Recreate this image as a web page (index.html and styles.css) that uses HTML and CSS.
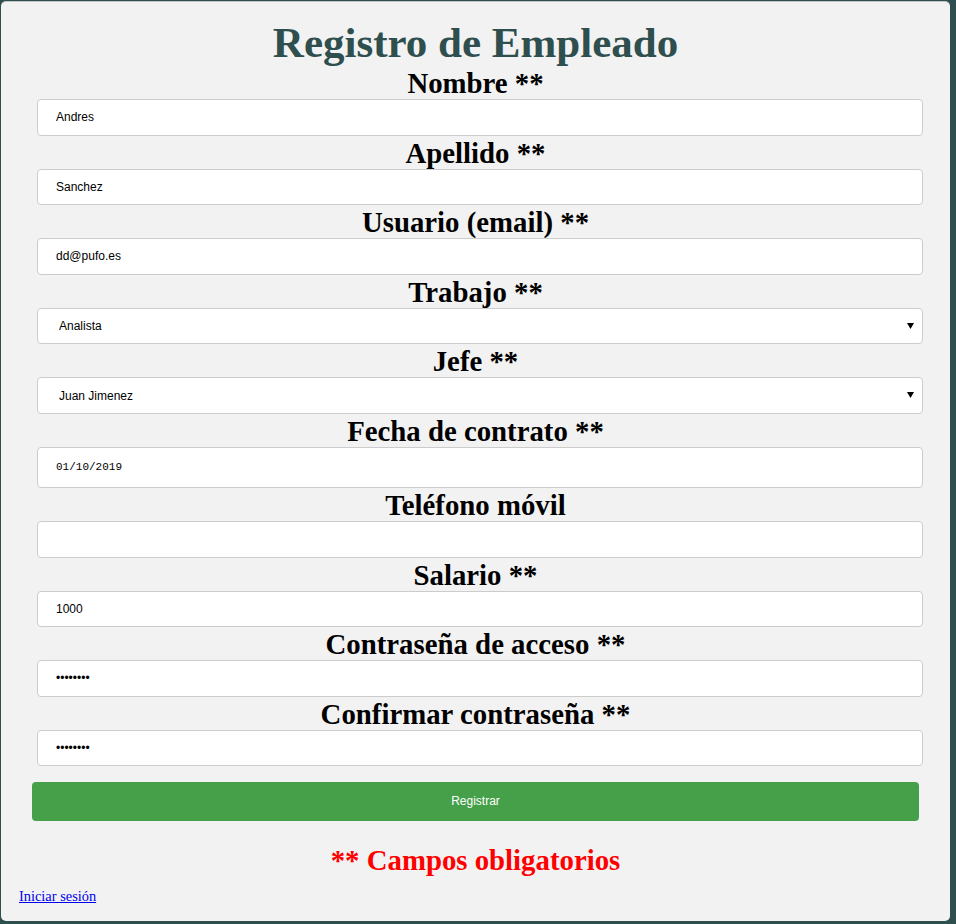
FILE: index.html
```html
<!DOCTYPE html>
<html lang="es">
<head>
<meta charset="utf-8">
<title>Registro de Empleado</title>
<link rel="stylesheet" href="styles.css">
</head>
<body>
<div class="container">
  <h1 class="title">Registro de Empleado</h1>
  <form class="form" action="#" onsubmit="return false">
    <label class="label" for="nombre">Nombre **</label>
    <input class="field" id="nombre" type="text" value="Andres">

    <label class="label" for="apellido">Apellido **</label>
    <input class="field" id="apellido" type="text" value="Sanchez">

    <label class="label" for="email">Usuario (email) **</label>
    <input class="field" id="email" type="text" value="dd@pufo.es">

    <label class="label" for="trabajo">Trabajo **</label>
    <div class="select-wrap">
      <select class="field select" id="trabajo">
        <option>Analista</option>
        <option>Programador</option>
      </select>
      <svg class="arrow" width="7" height="6" viewBox="0 0 7 6"><path d="M0 0H7L3.5 6Z" fill="#000"/></svg>
    </div>

    <label class="label" for="jefe">Jefe **</label>
    <div class="select-wrap">
      <select class="field select" id="jefe">
        <option>Juan Jimenez</option>
      </select>
      <svg class="arrow" width="7" height="6" viewBox="0 0 7 6"><path d="M0 0H7L3.5 6Z" fill="#000"/></svg>
    </div>

    <label class="label" for="fecha">Fecha de contrato **</label>
    <input class="field date" id="fecha" type="text" value="01/10/2019">

    <label class="label" for="telefono">Teléfono móvil</label>
    <input class="field" id="telefono" type="text" value="">

    <label class="label" for="salario">Salario **</label>
    <input class="field" id="salario" type="text" value="1000">

    <label class="label" for="pass">Contraseña de acceso **</label>
    <input class="field" id="pass" type="password" value="12345678">

    <label class="label" for="pass2">Confirmar contraseña **</label>
    <input class="field" id="pass2" type="password" value="12345678">

    <button class="submit" type="submit">Registrar</button>
  </form>
  <p class="required">** Campos obligatorios</p>
  <a class="login" href="#">Iniciar sesión</a>
</div>
</body>
</html>
```

FILE: styles.css
```css
html, body {
  margin: 0;
}
body {
  background: #2f4f4f;
  padding: 1px 6px 4px 1px;
  font-family: "Liberation Serif", "Times New Roman", serif;
}
.container {
  background: #f2f2f2;
  border-top: 1px solid #c4c4c4;
  border-radius: 5px;
  padding: 16px 18px 16px 18px;
}
.title {
  margin: 0;
  padding-top: 1px;
  font-size: 43px;
  line-height: 47px;
  font-weight: bold;
  color: #2f4f4f;
  text-align: center;
}
.form {
  margin: 0 13px;
  display: flex;
  flex-direction: column;
}
.label {
  display: block;
  padding-top: 2px;
  font-size: 28.8px;
  line-height: 31px;
  font-weight: bold;
  color: #000;
  text-align: center;
}
.field {
  box-sizing: border-box;
  display: block;
  margin: 0 0 0 5px;
  width: calc(100% - 1px);
  height: 36.6px;
  padding: 0 18px;
  border: 1px solid #ccc;
  border-radius: 4px;
  background: #fff;
  font-family: "Liberation Sans", Arial, sans-serif;
  font-size: 12px;
  color: #000;
  outline: none;
}
.date {
  height: 41px;
  font-family: "Liberation Mono", "DejaVu Sans Mono", monospace;
  font-size: 11px;
}
.select-wrap {
  position: relative;
}
.select {
  -webkit-appearance: none;
  appearance: none;
  padding-left: 21px;
}
.arrow {
  position: absolute;
  right: 5px;
  top: 15px;
  pointer-events: none;
}
.submit {
  margin-top: 15.6px;
  height: 39px;
  width: 100%;
  border: none;
  border-radius: 4px;
  background: #45a049;
  color: #fff;
  font-family: "Liberation Sans", Arial, sans-serif;
  font-size: 12px;
  cursor: pointer;
}
.required {
  margin: 22px 0 11px;
  padding-top: 1px;
  font-size: 28.8px;
  line-height: 32px;
  font-weight: bold;
  color: #f00;
  text-align: center;
}
.login {
  display: inline-block;
  font-size: 14.4px;
  color: #0000ee;
  text-decoration: underline;
}
```
